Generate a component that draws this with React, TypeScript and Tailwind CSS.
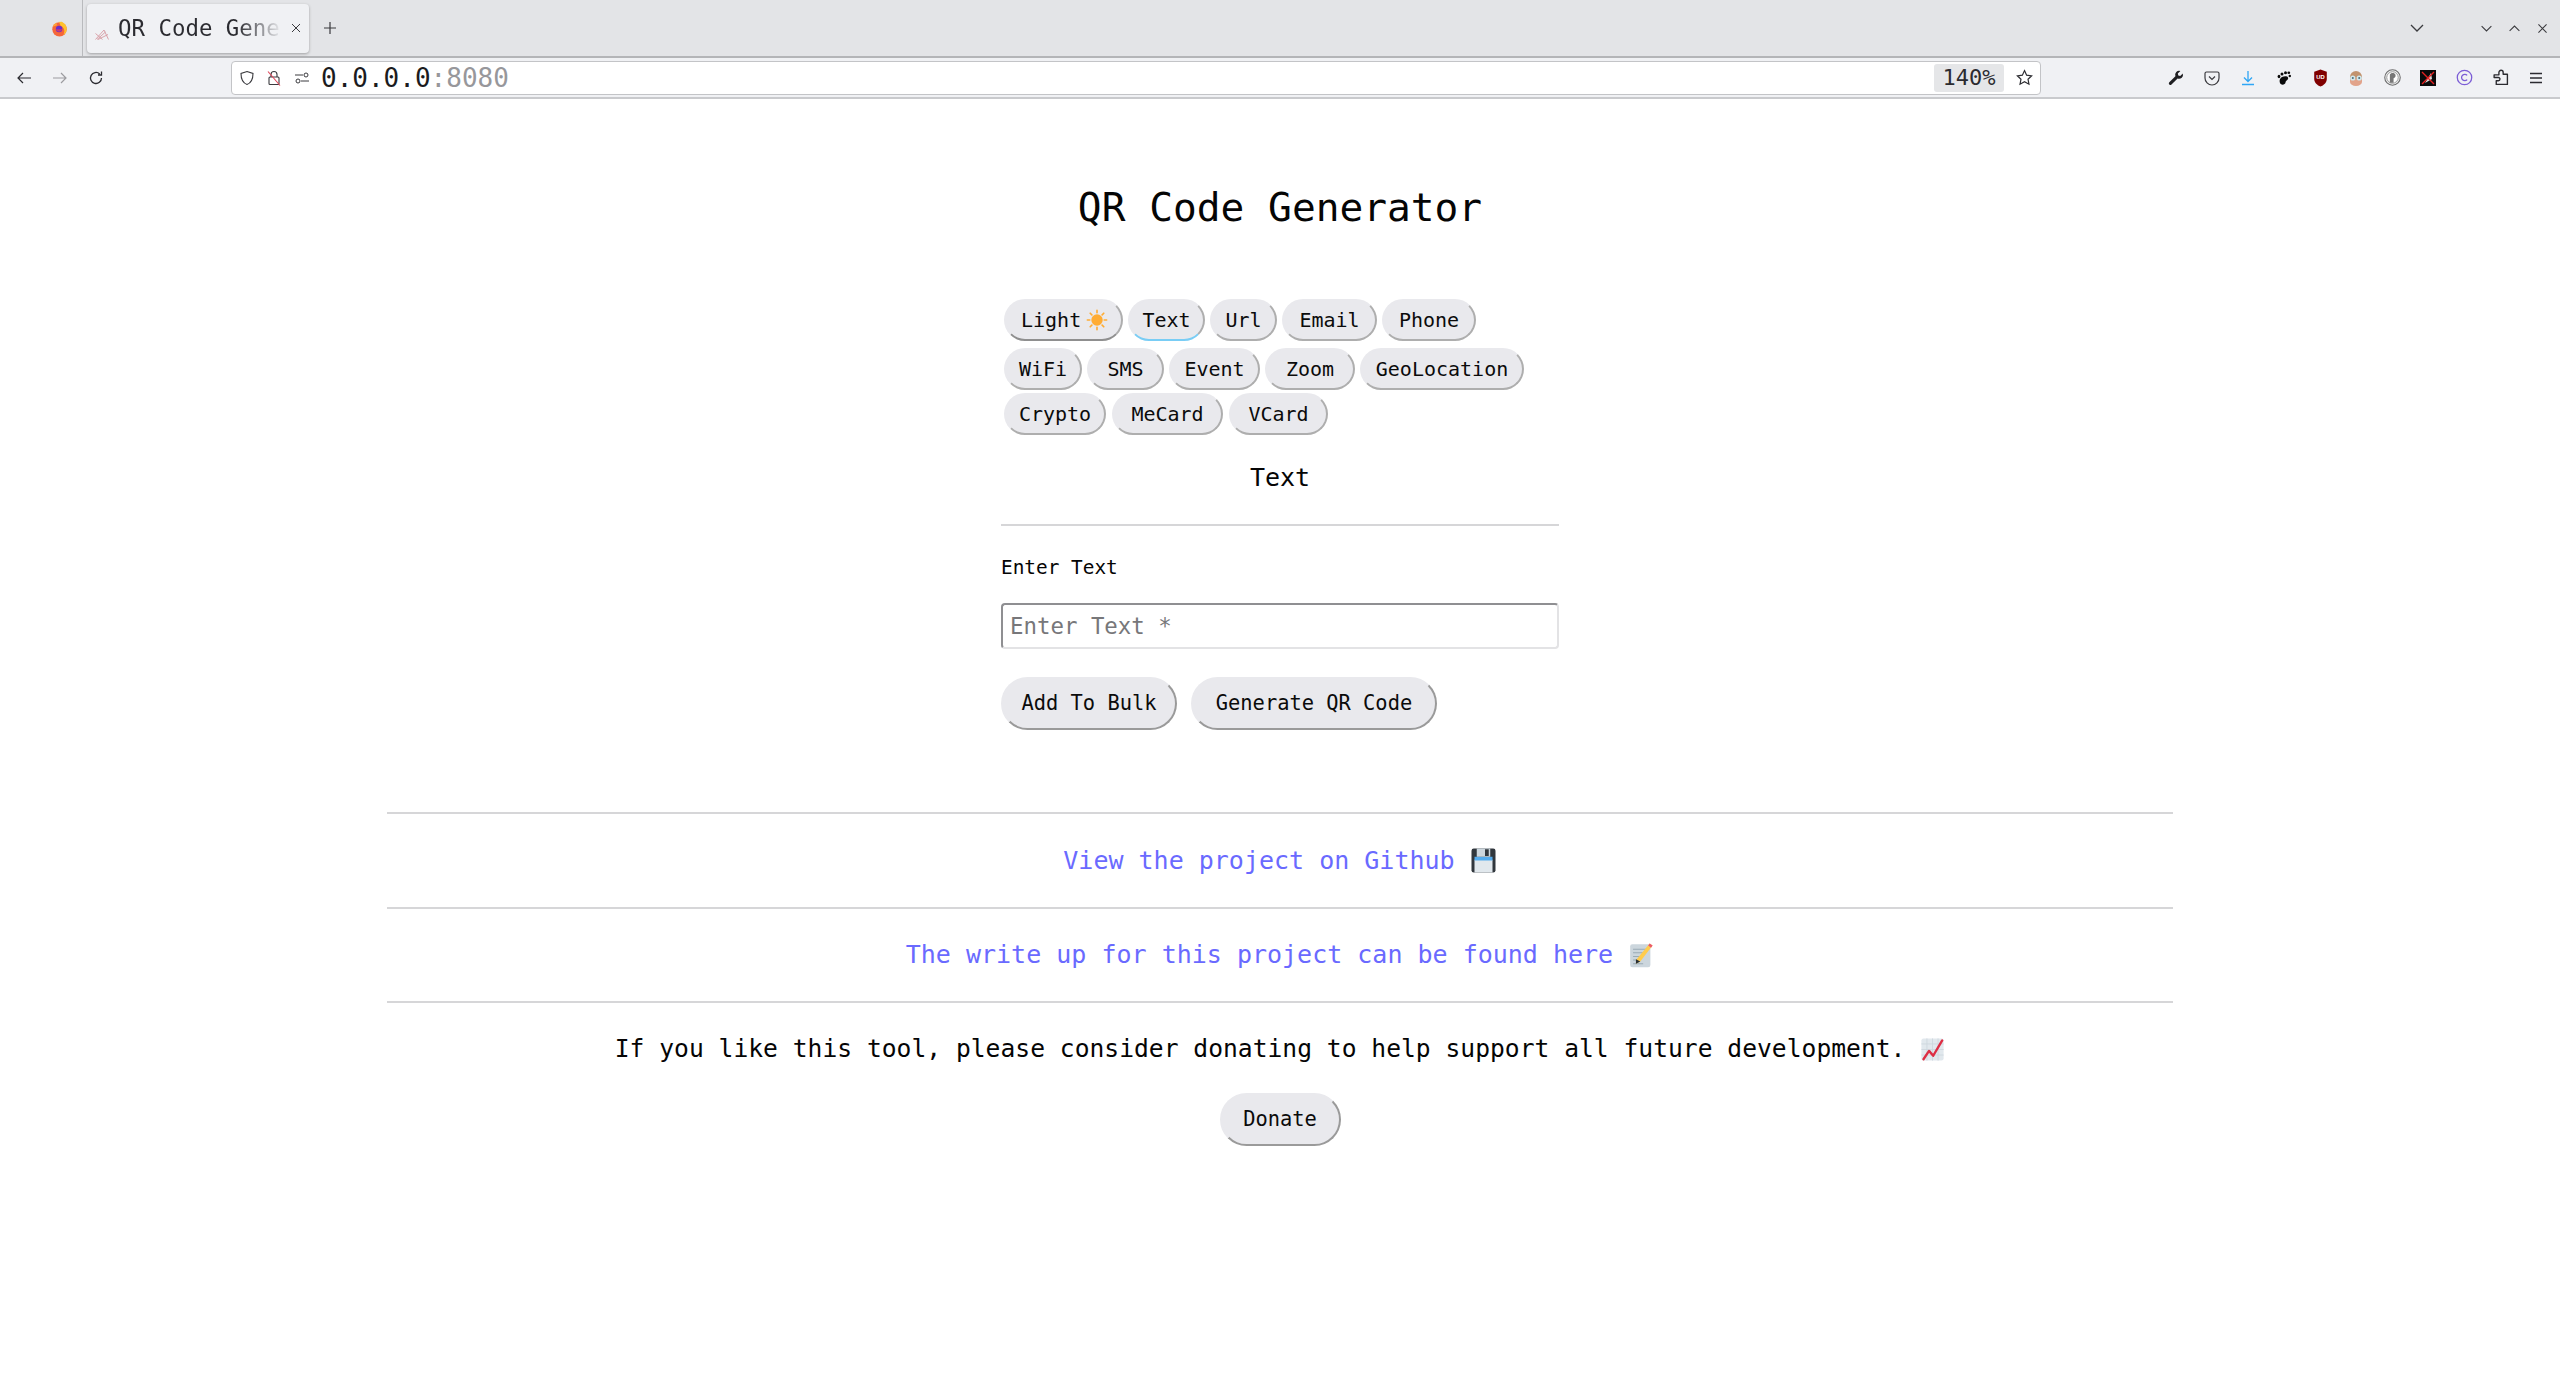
import React from "react";

const mono = "font-['DejaVu_Sans_Mono','Liberation_Mono',monospace]";

function Sun() {
  return (
    <svg viewBox="0 0 24 24" className="inline-block ml-[5px] w-[22px] h-[22px] align-[-4px]">
      <circle cx="12" cy="12" r="6.2" fill="#ffac33" />
      <g stroke="#ffac33" strokeWidth="1.8" strokeLinecap="round">
        <path d="M12 1.5v2.6M12 19.9v2.6M1.5 12h2.6M19.9 12h2.6M4.6 4.6l1.8 1.8M17.6 17.6l1.8 1.8M4.6 19.4l1.8-1.8M17.6 6.4l1.8-1.8" />
      </g>
    </svg>
  );
}

function Floppy() {
  return (
    <svg viewBox="0 0 36 36" className="inline-block w-[27px] h-[27px] align-[-3px]">
      <rect x="2" y="2" width="32" height="32" rx="3" fill="#31373d" />
      <rect x="6" y="17" width="24" height="17" fill="#e1e8ed" />
      <rect x="6" y="13" width="24" height="5" fill="#55acee" />
      <rect x="9" y="2" width="18" height="11" fill="#ccd6dd" />
      <rect x="20" y="3" width="5" height="9" fill="#31373d" />
    </svg>
  );
}

function Memo() {
  return (
    <svg viewBox="0 0 36 36" className="inline-block w-[26px] h-[26px] align-[-3px]">
      <rect x="3" y="3" width="28" height="32" rx="3" fill="#ccd6dd" />
      <path d="M7 10h18M7 15h14M7 20h10M7 25h8M7 30h14" stroke="#99aab5" strokeWidth="1.4" />
      <path d="M30 2l4 3-17 22-6 3 1-6z" fill="#ffcc4d" />
      <path d="M30 2l4 3-2 3-4-3z" fill="#ea596e" />
      <path d="M11 24l6 3-6 3z" fill="#292f33" />
    </svg>
  );
}

function ChartUp() {
  return (
    <svg viewBox="0 0 36 36" className="inline-block w-[25px] h-[25px] align-[-3px]">
      <rect x="2" y="2" width="32" height="32" rx="3" fill="#e1e8ed" />
      <path d="M10 2v32M18 2v32M26 2v32M2 10h32M2 18h32M2 26h32" stroke="#ccd6dd" strokeWidth="1.2" />
      <path d="M5 32l8-12 6 7L32 5" fill="none" stroke="#dd2e44" strokeWidth="3.4" strokeLinejoin="round" strokeLinecap="round" />
    </svg>
  );
}

function Pill({
  children,
  w,
  bottom = "border-b-[#aeaeae]",
}: {
  children: React.ReactNode;
  w: string;
  bottom?: string;
}) {
  return (
    <button
      className={`${w} h-[42px] shrink-0 rounded-full bg-[#e9e9ed] border-2 border-t-[#e9e9ed] border-l-[#e9e9ed] border-r-[#aeaeae] ${bottom} text-[20px] text-[#0b0b0b] whitespace-pre`}
    >
      {children}
    </button>
  );
}

function Big({ children, w }: { children: React.ReactNode; w: string }) {
  return (
    <button
      className={`${w} h-[53px] shrink-0 rounded-full bg-[#e9e9ed] border-2 border-t-[#e9e9ed] border-l-[#e9e9ed] border-r-[#9a9a9a] border-b-[#9a9a9a] text-[20.4px] text-[#0b0b0b] whitespace-pre`}
    >
      {children}
    </button>
  );
}

function Ext({ children }: { children: React.ReactNode }) {
  return <div className="w-[36px] h-[24px] flex items-center justify-center">{children}</div>;
}

function Chevron({ className, d }: { className?: string; d: string }) {
  return (
    <svg viewBox="0 0 16 16" className={className} fill="none" stroke="#3a3a3e" strokeWidth="1.3">
      <path d={d} />
    </svg>
  );
}

function Tabs() {
  return (
    <div className={`${mono} h-[58px] bg-[#e3e4e7] border-b-2 border-[#b4b5b8] flex items-center`}>
      <div className="w-[83px] h-full border-r border-[#b9babd] flex items-center justify-end pr-[14px]">
        <svg viewBox="0 0 20 20" className="w-[17px] h-[17px]">
          <circle cx="10" cy="11" r="8.5" fill="#f5663a" />
          <path d="M9 1.500c1 2 4-.5 5 1.500 3 1.500 5 5 4.500 8.500-.4 3-2 5-4 6 3-5 0-10-3-10.500z" fill="#ffc22e" />
          <path d="M2 8c1-3 3-4 5-5-1 2 0 3 1 3z" fill="#ffa436" />
          <circle cx="9.500" cy="10.500" r="3.800" fill="#6b2fc9" />
          <path d="M5.700 11a3.800 3.800 0 0 0 7.400 0z" fill="#c83a7a" />
        </svg>
      </div>
      <div className="ml-[4px] w-[222px] h-[49px] bg-[#f0f1f4] rounded-[4px] shadow-[0_1px_3px_rgba(0,0,0,0.3)] flex items-center relative">
        <svg viewBox="0 0 14 11" className="w-[14px] h-[11px] ml-[8px] mt-[12px] shrink-0" fill="none" stroke="#d69aa2" strokeWidth="0.9">
          <path d="M0.500 10.500L9 1l4.500 9.500M2 10.500L10.500 3M0.500 4.500l7 6M3 10.500l10-5" />
        </svg>
        <span className="ml-[9px] text-[22.4px] leading-[28px] whitespace-pre w-[164px] overflow-hidden bg-gradient-to-r from-[#2b2b30] from-[72%] to-[#f0f1f4] to-[100%] bg-clip-text [-webkit-text-fill-color:transparent]">
          QR Code Generator
        </span>
        <svg viewBox="0 0 12 12" className="w-[12px] h-[12px] absolute left-[203px] top-[18px]" stroke="#3a3a3e" strokeWidth="1">
          <path d="M2 2l8 8M10 2l-8 8" />
        </svg>
      </div>
      <svg viewBox="0 0 16 16" className="ml-[13px] w-[16px] h-[16px]" stroke="#3a3a3e" strokeWidth="1.200">
        <path d="M8 2v12M2 8h12" />
      </svg>
      <div className="flex-1" />
      <Chevron className="w-[16px] h-[16px] mr-[55px]" d="M2 5l6 6 6-6" />
      <Chevron className="w-[13px] h-[13px] mr-[15px]" d="M2 5l6 6 6-6" />
      <Chevron className="w-[13px] h-[13px] mr-[15px]" d="M2 11l6-6 6 6" />
      <Chevron className="w-[13px] h-[13px] mr-[11px]" d="M3 3l10 10M13 3L3 13" />
    </div>
  );
}

function Toolbar() {
  return (
    <div className="h-[41px] bg-[#f0f1f4] border-b-2 border-[#c9cacd] flex items-center">
      <svg viewBox="0 0 16 16" className="ml-[16px] w-[16px] h-[16px]" fill="none" stroke="#2b2b30" strokeWidth="1.200">
        <path d="M15 8H2M7 3L2 8l5 5" />
      </svg>
      <svg viewBox="0 0 16 16" className="ml-[20px] w-[16px] h-[16px]" fill="none" stroke="#9c9ca0" strokeWidth="1.200">
        <path d="M1 8h13M9 3l5 5-5 5" />
      </svg>
      <svg viewBox="0 0 16 16" className="ml-[20px] w-[16px] h-[16px]" fill="none" stroke="#2b2b30" strokeWidth="1.300">
        <path d="M13.500 8a5.500 5.500 0 1 1-1.800-4.100M13.500 1.500v3.500H10" />
      </svg>
      <div className="ml-[127px] w-[1810px] h-[34px] bg-white border border-[#c3c4c7] rounded-[4px] flex items-center">
        <svg viewBox="0 0 16 16" className="ml-[7px] w-[16px] h-[16px]" fill="none" stroke="#3a3a3e" strokeWidth="1.100">
          <path d="M8 1.500l6 2c0 6-2 9.500-6 11-4-1.500-6-5-6-11z" />
        </svg>
        <svg viewBox="0 0 16 16" className="ml-[11px] w-[16px] h-[16px]" fill="none" stroke="#3a3a3e" strokeWidth="1.100">
          <rect x="3" y="7" width="10" height="7.500" rx="1" />
          <path d="M5 7V4.500a3 3 0 0 1 6 0V7" />
          <path d="M2 1.500l12 14" stroke="#e0455a" />
        </svg>
        <svg viewBox="0 0 16 16" className="ml-[12px] w-[16px] h-[16px]" fill="none" stroke="#3a3a3e" strokeWidth="1">
          <path d="M1 5h8M7 11h8" />
          <circle cx="12" cy="5" r="2" />
          <circle cx="4" cy="11" r="2" />
        </svg>
        <span className={`${mono} ml-[11px] text-[26px] leading-none text-[#1b1b20] whitespace-pre`}>
          0.0.0.0<span className="text-[#97979b]">:8080</span>
        </span>
        <div className="flex-1" />
        <div className={`${mono} w-[70px] h-[28px] bg-[#e5e6e8] rounded-[3px] flex items-center justify-center text-[22px] text-[#2b2b30]`}>
          140%
        </div>
        <svg viewBox="0 0 16 16" className="ml-[12px] mr-[7px] w-[17px] h-[17px]" fill="none" stroke="#2b2b30" strokeWidth="1.100">
          <path d="M8 1.500l2 4.300 4.700.6-3.400 3.200.9 4.700L8 12l-4.200 2.300.9-4.700L1.300 6.400 6 5.800z" />
        </svg>
      </div>
      <div className="flex-1" />
      <div className="flex items-center mr-[6px]">
        <Ext>
          <svg viewBox="0 0 16 16" className="w-[16px] h-[16px]" fill="#1f1f22">
            <path d="M14.800 3.500l-2.600 2.500-1.900-.5-.5-1.900L12.400 1a4 4 0 0 0-5 5.200L1.300 12.300a1.500 1.500 0 0 0 2.200 2.200l6.100-6a4 4 0 0 0 5.200-5z" />
          </svg>
        </Ext>
        <Ext>
          <svg viewBox="0 0 16 16" className="w-[16px] h-[16px]" fill="none" stroke="#3a3a3e" strokeWidth="1.200">
            <path d="M2.500 2h11A1.500 1.500 0 0 1 15 3.500V8a7 7 0 0 1-14 0V3.500A1.500 1.500 0 0 1 2.500 2z" />
            <path d="M5 6.500l3 3 3-3" />
          </svg>
        </Ext>
        <Ext>
          <svg viewBox="0 0 16 16" className="w-[16px] h-[16px]" fill="none" stroke="#2fa6f5" strokeWidth="1.300">
            <path d="M8 1v10M4 7.500L8 11.500l4-4M2 14.500h12" />
          </svg>
        </Ext>
        <Ext>
          <svg viewBox="0 0 16 16" className="w-[16px] h-[16px]" fill="#0a0a0a">
            <path d="M6 7c3-1.500 7-1 6 2-1 2-2.500 1.500-2.500 3.500-.3 2.500-4.500 3-5.500.5C3 10.500 4 8 6 7z" />
            <ellipse cx="3" cy="6.500" rx="1.400" ry="1.700" />
            <ellipse cx="6" cy="4" rx="1.500" ry="1.500" />
            <ellipse cx="9.500" cy="2.800" rx="1.500" ry="1.500" />
            <ellipse cx="12.800" cy="2.800" rx="1.400" ry="1.300" />
            <ellipse cx="13.800" cy="6" rx="1.200" ry="1.200" />
          </svg>
        </Ext>
        <Ext>
          <svg viewBox="0 0 16 20" className="w-[15px] h-[18px]">
            <path d="M8 .5l7 2.500v8c0 4-3.500 7-7 8.500-3.500-1.500-7-4.500-7-8.500V3z" fill="#800000" />
            <text x="8" y="11.500" textAnchor="middle" fontSize="6.500" fontWeight="700" fill="#fff" fontFamily="Liberation Sans, sans-serif">
              UD
            </text>
          </svg>
        </Ext>
        <Ext>
          <svg viewBox="0 0 16 16" className="w-[16px] h-[16px]">
            <circle cx="8" cy="7" r="6" fill="#c2936e" />
            <path d="M2 9h12v3a6 4 0 0 1-12 0z" fill="#e2a38a" />
            <circle cx="4.800" cy="8" r="2.600" fill="#cfe9ee" />
            <circle cx="11.200" cy="8" r="2.600" fill="#cfe9ee" />
            <circle cx="4.800" cy="8" r="1" fill="#4b6a75" />
            <circle cx="11.200" cy="8" r="1" fill="#4b6a75" />
          </svg>
        </Ext>
        <Ext>
          <svg viewBox="0 0 16 16" className="w-[17px] h-[17px]">
            <circle cx="8" cy="8" r="7.300" fill="#eceded" stroke="#6e6e6e" strokeWidth="1" />
            <circle cx="8" cy="8" r="5.400" fill="#ffffff" stroke="#8b8b8b" strokeWidth="0.800" />
            <path d="M5.500 13V5.500C6 3.500 10 3 10.800 5.500c.5 1.800-.5 3-1.800 3.300V13z" fill="#777" />
          </svg>
        </Ext>
        <Ext>
          <svg viewBox="0 0 16 16" className="w-[16px] h-[16px]">
            <rect width="16" height="16" fill="#0a0a0a" />
            <path d="M5 13l6-10 1 6z" fill="#d8d8d8" />
            <path d="M2 2l12 12M14 2L2 14" stroke="#e62020" strokeWidth="1.400" />
          </svg>
        </Ext>
        <Ext>
          <svg viewBox="0 0 16 16" className="w-[17px] h-[17px]" fill="none" stroke="#7b5cd6" strokeWidth="1.200">
            <circle cx="8" cy="8" r="6.800" />
            <path d="M10.500 6a3 3 0 1 0 0 4" />
          </svg>
        </Ext>
        <Ext>
          <svg viewBox="0 0 16 16" className="w-[17px] h-[17px]" fill="none" stroke="#2b2b30" strokeWidth="1.300" strokeLinejoin="round">
            <path d="M2 5.500h4.500V3.200a2 2 0 0 1 4 0V5h4v9.500H4v-3.500H6a1.500 1.500 0 0 0 0-3H2z" />
          </svg>
        </Ext>
        <Ext>
          <svg viewBox="0 0 16 16" className="w-[16px] h-[16px]" stroke="#2b2b30" strokeWidth="1.300">
            <path d="M2 3.500h12M2 8h12M2 12.500h12" />
          </svg>
        </Ext>
      </div>
    </div>
  );
}

export default function App() {
  return (
    <div className="w-[2560px] h-[1394px] bg-white overflow-hidden flex flex-col">
      <Tabs />
      <Toolbar />
      <main className={`${mono} flex-1 flex flex-col items-center text-[#050505]`}>
        <h1 className="mt-[83px] text-[39.5px] leading-[50px]">QR Code Generator</h1>

        <div className="mt-[67px] w-[558px] flex flex-col">
          <div className="pl-[3px] flex flex-col gap-[5px]">
            <div className="flex gap-[5px] mb-[2px]">
              <Pill w="w-[119px] text-left pl-[15px]" bottom="border-b-[#8f8f8f]">
                Light
                <Sun />
              </Pill>
              <Pill w="w-[77px]" bottom="border-b-[#79cdf5]">Text</Pill>
              <Pill w="w-[67px]">Url</Pill>
              <Pill w="w-[95px]">Email</Pill>
              <Pill w="w-[94px]">Phone</Pill>
            </div>
            <div className="flex gap-[5px] mb-[-2px]">
              <Pill w="w-[78px]">WiFi</Pill>
              <Pill w="w-[77px]">SMS</Pill>
              <Pill w="w-[91px]">Event</Pill>
              <Pill w="w-[90px]">Zoom</Pill>
              <Pill w="w-[164px]">GeoLocation</Pill>
            </div>
            <div className="flex gap-[6px]">
              <Pill w="w-[102px]">Crypto</Pill>
              <Pill w="w-[111px]">MeCard</Pill>
              <Pill w="w-[99px]">VCard</Pill>
            </div>
          </div>

          <h2 className="mt-[27px] text-center text-[25px] leading-[32px]">Text</h2>
          <hr className="mt-[30px] border-t-2 border-[#d6d6d8]" />
          <label className="mt-[30px] text-[19.4px] leading-[24px]">Enter Text</label>
          <input
            className="mt-[23px] w-full h-[46px] rounded-[4px] bg-white border-2 border-t-[#8f8f92] border-l-[#8f8f92] border-r-[#e3e3e5] border-b-[#e3e3e5] pl-[7px] text-[22.4px] placeholder:text-[#77777a] outline-none"
            placeholder="Enter Text *"
            readOnly
          />
          <div className="mt-[28px] flex gap-[14px]">
            <Big w="w-[176px]">Add To Bulk</Big>
            <Big w="w-[246px]">Generate QR Code</Big>
          </div>
        </div>

        <div className="mt-[82px] w-[1786px] flex flex-col items-center">
          <hr className="w-full border-t-2 border-[#d6d6d8]" />
          <a className="h-[93px] flex items-center text-[25px] text-[#6a6aff] whitespace-pre">
            View the project on Github <Floppy />
          </a>
          <hr className="w-full border-t-2 border-[#d6d6d8]" />
          <a className="h-[92px] flex items-center text-[25px] text-[#6a6aff] whitespace-pre">
            The write up for this project can be found here <Memo />
          </a>
          <hr className="w-full border-t-2 border-[#d6d6d8]" />
          <p className="h-[90px] pt-[2px] flex items-center text-[24.65px] whitespace-pre">
            If you like this tool, please consider donating to help support all future development. <ChartUp />
          </p>
          <Big w="w-[121px]">Donate</Big>
        </div>
      </main>
    </div>
  );
}
